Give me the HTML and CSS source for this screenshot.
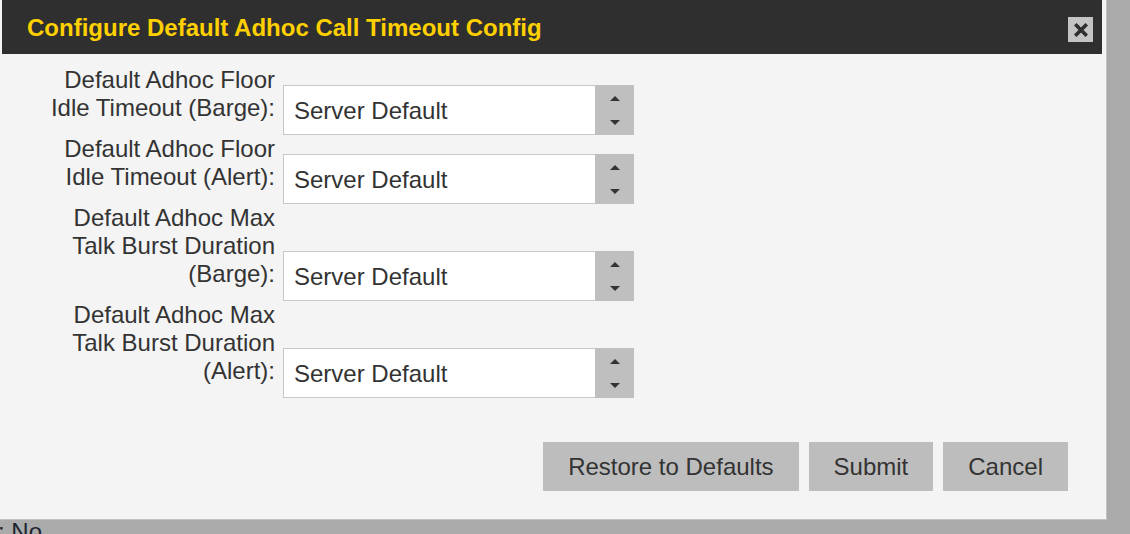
FILE: index.html
```html
<!DOCTYPE html>
<html>
<head>
<meta charset="utf-8">
<link rel="stylesheet" href="styles.css">
</head>
<body>
<div class="page">
  <div class="page-line">: No</div>
</div>
<div class="dialog">
  <div class="titlebar">
    <span class="title">Configure Default Adhoc Call Timeout Config</span>
    <button class="close" aria-label="Close">
      <svg width="14" height="14" viewBox="0 0 14 14"><path d="M2.5 2.5 L11.5 11.5 M11.5 2.5 L2.5 11.5" stroke="#2f2f2f" stroke-width="3.6" stroke-linecap="square"/></svg>
    </button>
  </div>
  <div class="content">
    <div class="row">
      <div class="label">Default Adhoc Floor<br>Idle Timeout (Barge):</div>
      <div class="select"><span class="value">Server Default</span><span class="spin"><i class="up"></i><i class="down"></i></span></div>
    </div>
    <div class="row">
      <div class="label">Default Adhoc Floor<br>Idle Timeout (Alert):</div>
      <div class="select"><span class="value">Server Default</span><span class="spin"><i class="up"></i><i class="down"></i></span></div>
    </div>
    <div class="row">
      <div class="label">Default Adhoc Max<br>Talk Burst Duration<br>(Barge):</div>
      <div class="select"><span class="value">Server Default</span><span class="spin"><i class="up"></i><i class="down"></i></span></div>
    </div>
    <div class="row">
      <div class="label">Default Adhoc Max<br>Talk Burst Duration<br>(Alert):</div>
      <div class="select"><span class="value">Server Default</span><span class="spin"><i class="up"></i><i class="down"></i></span></div>
    </div>
    <div class="buttons">
      <button class="btn">Restore to Defaults</button>
      <button class="btn">Submit</button>
      <button class="btn">Cancel</button>
    </div>
  </div>
</div>
</body>
</html>
```

FILE: styles.css
```css
html, body {
  margin: 0;
  padding: 0;
}
body {
  width: 1130px;
  height: 534px;
  overflow: hidden;
  background: #aaaaaa;
  font-family: "Liberation Sans", Arial, sans-serif;
  position: relative;
}
.page {
  padding-top: 517px;
}
.page-line {
  font-size: 24px;
  line-height: 30px;
  color: #1c2430;
  margin-left: -2px;
}
.dialog {
  position: absolute;
  left: -3px;
  top: -5px;
  width: 1100px;
  padding: 4px;
  background: #f4f4f4;
  border: 1px solid #c2c2c2;
}
.titlebar {
  height: 54px;
  background: #2f2f2f;
  display: flex;
  align-items: center;
  justify-content: space-between;
  padding: 0 9px 0 25px;
}
.title {
  color: #ffd000;
  font-size: 24px;
  font-weight: bold;
  line-height: 54px;
  padding-top: 2px;
}
.close {
  width: 25px;
  height: 25px;
  margin-top: 5px;
  border: 0;
  padding: 0;
  background: #c4c4c4;
  display: flex;
  align-items: center;
  justify-content: center;
}
.content {
  padding: 12px 34px 24px 38px;
}
.row {
  display: flex;
  align-items: flex-end;
  gap: 8px;
}
.label {
  width: 235px;
  text-align: right;
  font-size: 24px;
  line-height: 28px;
  color: #333333;
  padding-bottom: 13px;
}
.select {
  width: 349px;
  height: 48px;
  border: 1px solid #c8c8c8;
  background: #ffffff;
  display: flex;
  align-items: center;
  justify-content: space-between;
}
.value {
  font-size: 24px;
  color: #333333;
  padding-left: 10px;
  padding-top: 1px;
}
.spin {
  width: 39px;
  height: 50px;
  margin: -1px -1px -1px 0;
  background: #bfbfbf;
  display: flex;
  flex-direction: column;
  align-items: center;
  justify-content: space-between;
  padding: 11px 0 10px;
  box-sizing: border-box;
}
.spin .up {
  width: 0;
  height: 0;
  border-left: 5px solid transparent;
  border-right: 5px solid transparent;
  border-bottom: 5px solid #333333;
}
.spin .down {
  width: 0;
  height: 0;
  border-left: 5px solid transparent;
  border-right: 5px solid transparent;
  border-top: 5px solid #333333;
}
.buttons {
  display: flex;
  justify-content: flex-end;
  gap: 10px;
  margin-top: 44px;
}
.btn {
  height: 49px;
  border: 0;
  background: #bdbdbd;
  color: #333333;
  font-family: "Liberation Sans", Arial, sans-serif;
  font-size: 24px;
  padding: 0 25px;
}
```
